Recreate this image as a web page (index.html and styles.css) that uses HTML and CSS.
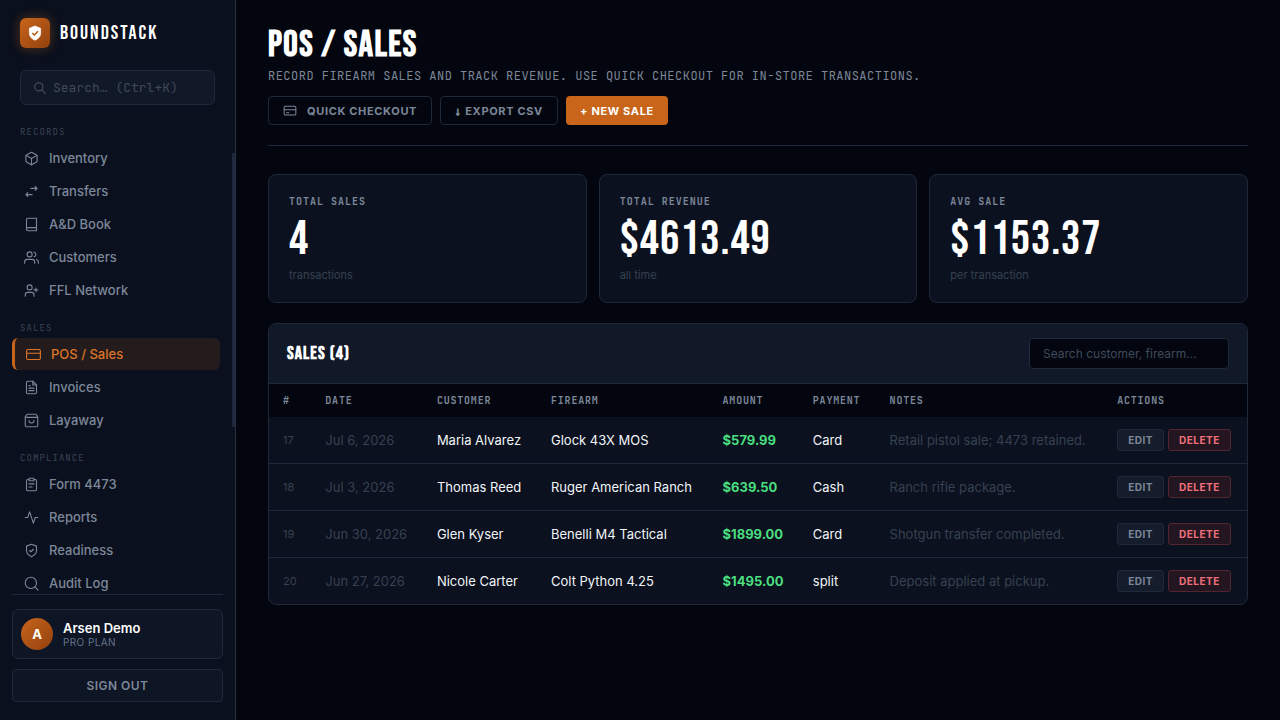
FILE: index.html
```html
<!DOCTYPE html>
<html lang="en">
<head>
<meta charset="utf-8">
<meta name="viewport" content="width=device-width, initial-scale=1.0">
<title>POS / Sales - BoundStack</title>
<link rel="stylesheet" href="styles.css">
</head>
<body>
<div class="app">
  <aside class="sidebar">
    <div class="brand">
      <span class="brand-logo">
        <svg viewBox="0 0 24 24" width="16" height="16"><path d="M12 1.500 3.500 5v7c0 5.200 3.600 9 8.500 10.800 4.900-1.800 8.500-5.600 8.500-10.800V5z" fill="#fff" stroke="#fff" stroke-linejoin="round"/><path d="m8 12 3 3 5.500-5.500" fill="none" stroke="#b4560f" stroke-width="2.200"/></svg>
      </span>
      <span class="brand-name">BOUNDSTACK</span>
    </div>
    <label class="side-search">
      <svg class="icon" viewBox="0 0 24 24" width="14" height="14"><circle cx="10" cy="10" r="7"/><path d="m15 15 6.500 6.500"/></svg>
      <input type="text" placeholder="Search… (Ctrl+K)" aria-label="Search">
    </label>
    <nav class="nav">
      <div class="nav-label">Records</div>
      <a class="nav-item" href="#"><svg class="icon" viewBox="0 0 24 24" width="15" height="15"><path d="M21 16V8a2 2 0 0 0-1-1.730l-7-4a2 2 0 0 0-2 0l-7 4A2 2 0 0 0 3 8v8a2 2 0 0 0 1 1.730l7 4a2 2 0 0 0 2 0l7-4A2 2 0 0 0 21 16z"/><path d="M3.270 6.960 12 12l8.730-5.040M12 22V12"/></svg>Inventory</a>
      <a class="nav-item" href="#"><svg class="icon" viewBox="0 0 24 24" width="15" height="15"><path d="M11 7h10M18 4l3 3-3 3M13 17H3M6 14l-3 3 3 3"/></svg>Transfers</a>
      <a class="nav-item" href="#"><svg class="icon" viewBox="0 0 24 24" width="15" height="15"><path d="M4 19.500A2.500 2.500 0 0 1 6.500 17H20"/><path d="M6.500 2H20v20H6.500A2.500 2.500 0 0 1 4 19.500v-15A2.500 2.500 0 0 1 6.500 2z"/></svg>A&amp;D Book</a>
      <a class="nav-item" href="#"><svg class="icon" viewBox="0 0 24 24" width="15" height="15"><path d="M17 21v-2a4 4 0 0 0-4-4H5a4 4 0 0 0-4 4v2"/><circle cx="9" cy="7" r="4"/><path d="M23 21v-2a4 4 0 0 0-3-3.870M16 3.130a4 4 0 0 1 0 7.750"/></svg>Customers</a>
      <a class="nav-item" href="#"><svg class="icon" viewBox="0 0 24 24" width="15" height="15"><path d="M16 21v-2a4 4 0 0 0-4-4H6a4 4 0 0 0-4 4v2"/><circle cx="9" cy="7" r="4"/><path d="M19 8v6M16 11h6"/></svg>FFL Network</a>
      <div class="nav-label">Sales</div>
      <a class="nav-item active" href="#" aria-current="page"><svg class="icon" viewBox="0 0 24 24" width="15" height="15"><rect x="1" y="4" width="22" height="16" rx="2"/><path d="M1 10h22"/></svg>POS / Sales</a>
      <a class="nav-item" href="#"><svg class="icon" viewBox="0 0 24 24" width="15" height="15"><path d="M14 2H6a2 2 0 0 0-2 2v16a2 2 0 0 0 2 2h12a2 2 0 0 0 2-2V8z"/><path d="M14 2v6h6M16 13H8M16 17H8M10 9H8"/></svg>Invoices</a>
      <a class="nav-item" href="#"><svg class="icon" viewBox="0 0 24 24" width="15" height="15"><path d="M5 2 2 6v14a2 2 0 0 0 2 2h16a2 2 0 0 0 2-2V6l-3-4zM2 7h20M16 12a4 4 0 0 1-8 0"/></svg>Layaway</a>
      <div class="nav-label">Compliance</div>
      <a class="nav-item" href="#"><svg class="icon" viewBox="0 0 24 24" width="15" height="15"><path d="M16 4h2a2 2 0 0 1 2 2v14a2 2 0 0 1-2 2H6a2 2 0 0 1-2-2V6a2 2 0 0 1 2-2h2"/><rect x="8" y="2" width="8" height="4" rx="1"/><path d="M8 11h8M8 16h5"/></svg>Form 4473</a>
      <a class="nav-item" href="#"><svg class="icon" viewBox="0 0 24 24" width="15" height="15"><path d="M22 12h-4l-3 9L9 3l-3 9H2"/></svg>Reports</a>
      <a class="nav-item" href="#"><svg class="icon" viewBox="0 0 24 24" width="15" height="15"><path d="M12 22s8-4 8-10V5l-8-3-8 3v7c0 6 8 10 8 10z"/><path d="m9 12 2 2 4-4"/></svg>Readiness</a>
      <a class="nav-item" href="#"><svg class="icon" viewBox="0 0 24 24" width="15" height="15"><circle cx="11" cy="11" r="9"/><path d="m17.500 17.500 5 5"/></svg>Audit Log</a>
    </nav>
    <div class="side-footer">
      <div class="user-card">
        <span class="avatar">A</span>
        <div>
          <div class="user-name">Arsen Demo</div>
          <div class="user-plan">Pro plan</div>
        </div>
      </div>
      <button class="signout" type="button">Sign out</button>
    </div>
    <div class="scroll-thumb"></div>
  </aside>

  <main class="main">
    <header class="page-header">
      <h1>POS / SALES</h1>
      <p class="subtitle">Record firearm sales and track revenue. Use quick checkout for in-store transactions.</p>
      <div class="actions">
        <button class="btn btn-icon" type="button"><svg class="icon" viewBox="0 0 24 24" width="14" height="14"><rect x="2" y="4" width="20" height="15" rx="2"/><path d="M2 10h20M6 15h4"/></svg>Quick checkout</button>
        <button class="btn btn-export" type="button"><span class="arrow">↓</span>Export CSV</button>
        <button class="btn btn-primary" type="button">+ New sale</button>
      </div>
    </header>

    <section class="stats">
      <div class="stat">
        <div class="stat-label">Total sales</div>
        <div class="stat-value">4</div>
        <div class="stat-note">transactions</div>
      </div>
      <div class="stat">
        <div class="stat-label">Total revenue</div>
        <div class="stat-value">$4613.49</div>
        <div class="stat-note">all time</div>
      </div>
      <div class="stat">
        <div class="stat-label">Avg sale</div>
        <div class="stat-value">$1153.37</div>
        <div class="stat-note">per transaction</div>
      </div>
    </section>

    <section class="panel">
      <div class="panel-header">
        <h2>SALES (4)</h2>
        <input class="panel-search" type="text" placeholder="Search customer, firearm..." aria-label="Search customer, firearm">
      </div>
      <table class="sales">
        <thead>
          <tr><th>#</th><th>Date</th><th>Customer</th><th>Firearm</th><th>Amount</th><th>Payment</th><th>Notes</th><th>Actions</th></tr>
        </thead>
        <tbody>
          <tr>
            <td class="id">17</td><td class="dim">Jul 6, 2026</td><td>Maria Alvarez</td><td>Glock 43X MOS</td><td class="amount">$579.99</td><td>Card</td><td class="dim">Retail pistol sale; 4473 retained.</td>
            <td><div class="row-actions"><button class="btn-sm" type="button">Edit</button><button class="btn-sm danger" type="button">Delete</button></div></td>
          </tr>
          <tr>
            <td class="id">18</td><td class="dim">Jul 3, 2026</td><td>Thomas Reed</td><td>Ruger American Ranch</td><td class="amount">$639.50</td><td>Cash</td><td class="dim">Ranch rifle package.</td>
            <td><div class="row-actions"><button class="btn-sm" type="button">Edit</button><button class="btn-sm danger" type="button">Delete</button></div></td>
          </tr>
          <tr>
            <td class="id">19</td><td class="dim">Jun 30, 2026</td><td>Glen Kyser</td><td>Benelli M4 Tactical</td><td class="amount">$1899.00</td><td>Card</td><td class="dim">Shotgun transfer completed.</td>
            <td><div class="row-actions"><button class="btn-sm" type="button">Edit</button><button class="btn-sm danger" type="button">Delete</button></div></td>
          </tr>
          <tr>
            <td class="id">20</td><td class="dim">Jun 27, 2026</td><td>Nicole Carter</td><td>Colt Python 4.25</td><td class="amount">$1495.00</td><td>split</td><td class="dim">Deposit applied at pickup.</td>
            <td><div class="row-actions"><button class="btn-sm" type="button">Edit</button><button class="btn-sm danger" type="button">Delete</button></div></td>
          </tr>
        </tbody>
      </table>
    </section>
  </main>
</div>
</body>
</html>
```
FILE: styles.css
```css
:root {
  --bg: #03060e;
  --surface: #0b111e;
  --surface-2: #111827;
  --border: #1e293b;
  --text: #f1f5f9;
  --muted: #7c8799;
  --dim: #364152;
  --accent: #c8651b;
  --display: "Bebas Neue", "Roboto Condensed", "Liberation Sans Narrow", sans-serif;
  --mono: "JetBrains Mono", "Liberation Mono", monospace;
}
* { box-sizing: border-box; }
body {
  margin: 0;
  background: var(--bg);
  color: var(--text);
  font: 13px/20px Inter, sans-serif;
}
button, input { font-family: inherit; }
button { cursor: pointer; text-transform: uppercase; }
.icon {
  flex: none;
  fill: none;
  stroke: currentColor;
  stroke-width: 1.75;
  stroke-linecap: round;
  stroke-linejoin: round;
}
.app { display: flex; height: 100vh; }

/* sidebar */
.sidebar {
  position: relative;
  flex: none;
  display: flex;
  flex-direction: column;
  width: 236px;
  background: #0a101d;
  border-right: 1px solid #2b303c;
}
.scroll-thumb {
  position: absolute;
  top: 153px;
  right: 0;
  width: 3px;
  height: 274px;
  background: #1e293f;
}
.brand {
  display: flex;
  align-items: center;
  gap: 10px;
  padding: 18px 20px 22px;
}
.brand-logo {
  display: grid;
  place-items: center;
  width: 30px;
  height: 30px;
  border-radius: 6px;
  background: linear-gradient(135deg, #c8651b, #92400e);
  box-shadow: 0 0 12px rgba(200, 101, 27, .4);
}
.brand-name {
  color: #fff;
  font: 20px/30px var(--display);
  letter-spacing: .1em;
}
.side-search {
  display: flex;
  align-items: center;
  gap: 6px;
  height: 35px;
  margin: 0 20px 21px;
  padding: 0 12px;
  border: 1px solid var(--border);
  border-radius: 6px;
  background: var(--surface-2);
  color: #4b5565;
}
.side-search input {
  width: 100%;
  min-width: 0;
  padding: 0;
  border: 0;
  outline: 0;
  background: none;
  color: var(--text);
  font: 13px/20px var(--mono);
}
::placeholder { color: #3f4a5c; opacity: 1; }
.nav {
  flex: 1;
  min-height: 0;
  padding: 0 12px;
  overflow-y: auto;
  scrollbar-width: none;
}
.nav-label {
  padding: 0 8px;
  color: #3b4556;
  font: 9px/12px var(--mono);
  letter-spacing: .12em;
  text-transform: uppercase;
}
.nav-item + .nav-label { margin-top: 16px; }
.nav-label + .nav-item { margin-top: 4px; }
.nav-item {
  display: flex;
  align-items: center;
  gap: 10px;
  height: 32px;
  margin: 0 3px 1px 0;
  padding: 0 12px;
  border-radius: 6px;
  color: var(--muted);
  font-weight: 500;
  text-decoration: none;
}
.nav-item.active {
  padding-left: 11px;
  border-left: 3px solid var(--accent);
  background: #241c1c;
  color: #dd7428;
}
.side-footer {
  display: grid;
  gap: 10px;
  margin: 0 12px;
  padding: 14px 0 18px;
  border-top: 1px solid var(--border);
}
.user-card {
  display: flex;
  align-items: center;
  gap: 10px;
  padding: 8px;
  border: 1px solid var(--border);
  border-radius: 6px;
  background: #0e1524;
}
.avatar {
  display: grid;
  place-items: center;
  width: 32px;
  height: 32px;
  border-radius: 50%;
  background: linear-gradient(135deg, #c8651b, #92400e);
  color: #fff;
  font-weight: 700;
}
.user-name { color: #fff; font-weight: 600; line-height: 16px; }
.user-plan {
  color: #64748b;
  font-size: 10px;
  line-height: 12px;
  letter-spacing: .04em;
  text-transform: uppercase;
}
.signout {
  height: 33px;
  border: 1px solid var(--border);
  border-radius: 4px;
  background: #0e1524;
  color: var(--muted);
  font-size: 12px;
  font-weight: 600;
  letter-spacing: .04em;
}

/* page */
.main {
  flex: 1;
  min-width: 0;
  padding: 28px 32px;
  overflow-y: auto;
}
.page-header {
  margin-bottom: 28px;
  padding-bottom: 20px;
  border-bottom: 1px solid var(--border);
}
h1, h2 { margin: 0; color: #fff; font-family: var(--display); }
h1 {
  font-size: 36px;
  line-height: 36px;
  letter-spacing: .04em;
}
.subtitle {
  margin: 3px 0 11px;
  color: var(--muted);
  font: 12px/18px var(--mono);
  letter-spacing: .04em;
  text-transform: uppercase;
}
.actions { display: flex; gap: 8px; }
.btn {
  display: flex;
  align-items: center;
  height: 29px;
  padding: 0 14px;
  border: 1px solid var(--border);
  border-radius: 4px;
  background: none;
  color: var(--muted);
  font-size: 11px;
  font-weight: 700;
  letter-spacing: .06em;
}
.btn-icon { gap: 10px; }
.btn-export { gap: 4px; }
.arrow {
  font-family: "Liberation Sans", sans-serif;
  -webkit-text-stroke: 1px currentColor;
}
.btn-primary {
  border: 0;
  background: var(--accent);
  color: #fff;
}
.stats {
  display: grid;
  grid-template-columns: repeat(3, 1fr);
  gap: 12px;
  margin-bottom: 20px;
}
.stat {
  padding: 20px;
  border: 1px solid var(--border);
  border-radius: 8px;
  background: var(--surface);
}
.stat-label {
  color: var(--muted);
  font: bold 10px/14px var(--mono);
  letter-spacing: .1em;
  text-transform: uppercase;
}
.stat-value {
  margin: 7px 0 5px;
  color: #fff;
  font: 48px/48px var(--display);
  letter-spacing: .02em;
}
.stat-note { color: var(--dim); font-size: 11px; line-height: 13px; }

/* sales table */
.panel {
  border: 1px solid var(--border);
  border-radius: 8px;
  background: var(--surface);
  overflow: hidden;
}
.panel-header {
  display: flex;
  align-items: center;
  justify-content: space-between;
  padding: 14px 18px;
  border-bottom: 1px solid var(--border);
  background: var(--surface-2);
}
h2 {
  font-size: 18px;
  line-height: 24px;
  letter-spacing: .06em;
}
.panel-search {
  width: 200px;
  height: 31px;
  padding: 0 13px;
  border: 1px solid var(--border);
  border-radius: 4px;
  background: var(--bg);
  color: var(--text);
  font-size: 12px;
}
.sales { width: 100%; border-spacing: 0; }
.sales th {
  height: 33px;
  padding: 0 14px;
  background: var(--bg);
  color: var(--muted);
  font: bold 10px/14px var(--mono);
  letter-spacing: .08em;
  text-align: left;
  text-transform: uppercase;
}
.sales td {
  height: 47px;
  padding: 0 14px;
  border-bottom: 1px solid var(--border);
  white-space: nowrap;
}
.sales tbody tr:last-child td { height: 46px; border-bottom: 0; }
.sales .id { color: var(--dim); font-size: 11px; }
.sales .dim { color: var(--dim); }
.sales .amount { color: #4ade80; font-weight: 700; }
.row-actions { display: flex; gap: 4px; }
.btn-sm {
  height: 22px;
  padding: 0 10px;
  border: 1px solid var(--border);
  border-radius: 3px;
  background: #151c2c;
  color: var(--muted);
  font-size: 10px;
  font-weight: 700;
  letter-spacing: .05em;
}
.btn-sm.danger {
  border-color: #52252f;
  background: #231620;
  color: #f0707a;
}
```
